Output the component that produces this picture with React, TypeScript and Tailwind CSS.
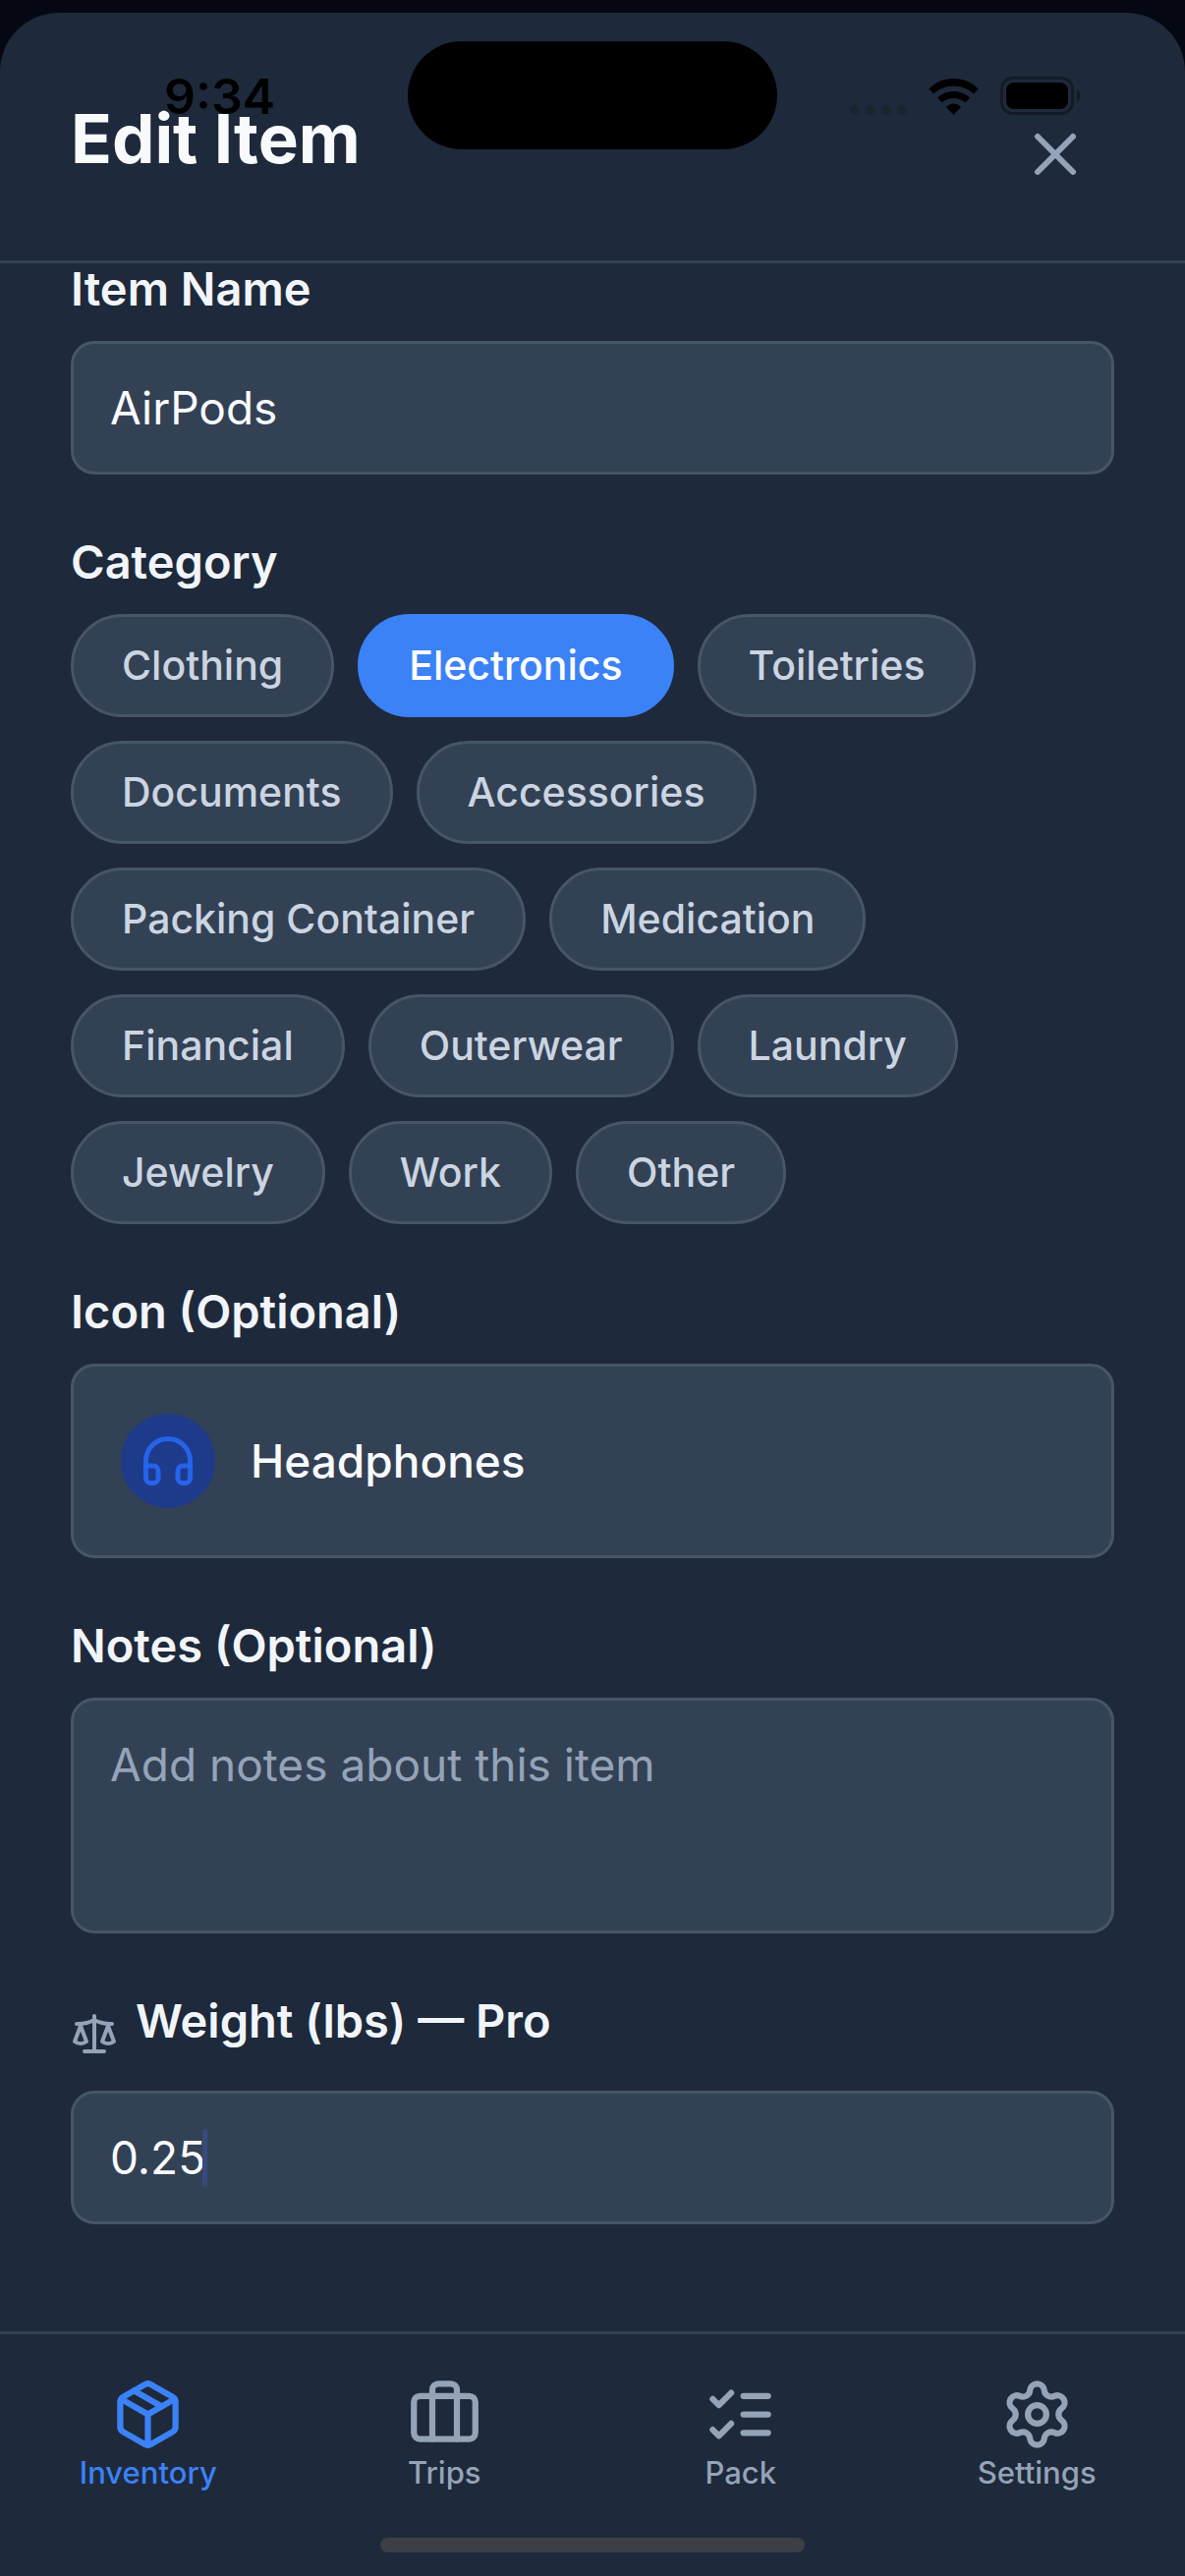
import { useState } from "react";
import { Headphones, Package, Scale, Settings, X } from "lucide-react";
import clsx from "clsx";

const categories = [
  "Clothing",
  "Electronics",
  "Toiletries",
  "Documents",
  "Accessories",
  "Packing Container",
  "Medication",
  "Financial",
  "Outerwear",
  "Laundry",
  "Jewelry",
  "Work",
  "Other",
];

const fieldClass =
  "w-full rounded-3xl border-[3px] border-[#475569] bg-[#334155] px-[37px] text-[46px] leading-[58px] text-[#f8fafc] outline-none placeholder:text-[#94a3b8]";
const labelClass = "block text-[47px] leading-[50px] font-semibold text-[#f1f5f9]";

function SuitcaseIcon() {
  return (
    <svg
      className="size-[75px]"
      viewBox="0 0 24 24"
      fill="none"
      stroke="currentColor"
      strokeWidth="2"
      strokeLinecap="round"
      strokeLinejoin="round"
    >
      <path d="M16 20V4a2 2 0 0 0-2-2h-4a2 2 0 0 0-2 2v16" />
      <rect x="2" y="6" width="20" height="14" rx="2" />
    </svg>
  );
}

function ChecksIcon() {
  return (
    <svg
      className="size-[75px]"
      viewBox="0 0 24 24"
      fill="none"
      stroke="currentColor"
      strokeWidth="2"
      strokeLinecap="round"
      strokeLinejoin="round"
    >
      <path d="m3 7 2 2 4-4" />
      <path d="m3 17 2 2 4-4" />
      <path d="M13 6h8" />
      <path d="M13 12h8" />
      <path d="M13 18h8" />
    </svg>
  );
}

const tabs = [
  { name: "Inventory", icon: <Package className="size-[75px]" /> },
  { name: "Trips", icon: <SuitcaseIcon /> },
  { name: "Pack", icon: <ChecksIcon /> },
  { name: "Settings", icon: <Settings className="size-[75px]" /> },
];

function StatusBar() {
  return (
    <div className="absolute inset-x-0 top-0 grid grid-cols-[1fr_auto_1fr] items-start text-black">
      <span className="pt-[66px] pl-8 text-center text-[50px] leading-[64px] font-semibold">9:34</span>
      <div className="mt-[42px] h-[110px] w-[376px] rounded-full bg-black" />
      <div className="flex items-center justify-end gap-[22px] pt-[78px] pr-[106px]">
        <svg className="h-[38px] w-[58px] fill-[#19242f]" viewBox="0 0 58 38">
          <circle cx="5" cy="33" r="5" />
          <circle cx="21" cy="33" r="5" />
          <circle cx="37" cy="33" r="5" />
          <circle cx="53" cy="33" r="5" />
        </svg>
        <svg className="h-[38px] w-[51px]" viewBox="0 0 51 38">
          <path d="M25.500 1C35.500 1 44.500 5 50.500 11.500L46 16.500C40.500 11.500 33.500 8.500 25.500 8.500S10.500 11.500 5 16.500L.5 11.500C6.500 5 15.500 1 25.500 1Z" />
          <path d="M25.500 14C32 14 37.500 16.500 42 20.500L37.500 25.500C34 22.500 30 21 25.500 21S17 22.500 13.500 25.500L9 20.500C13.500 16.500 19 14 25.500 14Z" />
          <path d="M25.500 26.500C28.500 26.500 31 27.800 33 30L25.500 38L18 30C20 27.800 22.500 26.500 25.500 26.500Z" />
        </svg>
        <svg className="h-[39px] w-[82px]" viewBox="0 0 82 39">
          <rect x="1.500" y="1.500" width="72" height="36" rx="11" fill="none" stroke="#131b27" strokeWidth="3" />
          <rect x="6" y="6" width="63" height="27" rx="8" />
          <path d="M78 13.500a7 7 0 0 1 0 12Z" fill="#131b27" />
        </svg>
      </div>
    </div>
  );
}

export default function App() {
  const [name, setName] = useState("AirPods");
  const [category, setCategory] = useState("Electronics");
  const [notes, setNotes] = useState("");
  const [weight, setWeight] = useState("0.25");
  const [tab, setTab] = useState("Inventory");

  return (
    <div className="relative flex min-h-screen flex-col bg-[#050812] pt-[13px] font-['Inter','Liberation_Sans',sans-serif]">
      <div className="flex flex-1 flex-col rounded-t-[60px] bg-[#1e293b]">
        <StatusBar />

        <header className="relative flex items-start justify-between border-b-[3px] border-[#334155] px-[72px] pt-[84px] pb-12">
          <h1 className="text-[69px] leading-[88px] font-bold text-[#f8fafc]">Edit Item</h1>
          <button aria-label="Close" className="p-6 text-[#94a3b8]">
            <X className="size-[72px]" />
          </button>
        </header>

        <form className="flex flex-1 flex-col gap-16 px-[72px] pt-px" onSubmit={(e) => e.preventDefault()}>
          <div>
            <label htmlFor="name" className={clsx(labelClass, "mb-7")}>
              Item Name
            </label>
            <input
              id="name"
              className={clsx(fieldClass, "block h-[136px]")}
              value={name}
              onChange={(e) => setName(e.target.value)}
            />
          </div>

          <div role="group" aria-labelledby="category">
            <span id="category" className={clsx(labelClass, "mb-7")}>
              Category
            </span>
            <div className="flex flex-wrap gap-6">
              {categories.map((c) => (
                <button
                  key={c}
                  type="button"
                  aria-pressed={c === category}
                  onClick={() => setCategory(c)}
                  className={clsx(
                    "h-[105px] rounded-full border-[3px] px-[49px] text-[41px] font-medium",
                    c === category
                      ? "border-[#3b82f6] bg-[#3b82f6] text-white"
                      : "border-[#475569] bg-[#334155] text-[#cbd5e1]"
                  )}
                >
                  {c}
                </button>
              ))}
            </div>
          </div>

          <div>
            <span id="icon" className={clsx(labelClass, "mb-7")}>
              Icon (Optional)
            </span>
            <button
              type="button"
              aria-describedby="icon"
              className="flex w-full items-center gap-9 rounded-3xl border-[3px] border-[#475569] bg-[#334155] p-12 text-[46px] font-medium text-[#f8fafc]"
            >
              <span className="flex size-24 items-center justify-center rounded-full bg-[#1e3a8a] text-[#2563eb]">
                <Headphones className="size-[60px]" />
              </span>
              Headphones
            </button>
          </div>

          <div>
            <label htmlFor="notes" className={clsx(labelClass, "mb-7")}>
              Notes (Optional)
            </label>
            <textarea
              id="notes"
              placeholder="Add notes about this item"
              className={clsx(fieldClass, "block h-60 resize-none py-[36px]")}
              value={notes}
              onChange={(e) => setNotes(e.target.value)}
            />
          </div>

          <div>
            <div className="mb-[34px] flex items-start gap-[18px]">
              <Scale className="mt-[14px] size-12 text-[#94a3b8]" />
              <label htmlFor="weight" className={labelClass}>
                Weight (lbs) — Pro
              </label>
            </div>
            <div className="relative">
              <input
                id="weight"
                inputMode="decimal"
                className={clsx(fieldClass, "block h-[136px]")}
                value={weight}
                onChange={(e) => setWeight(e.target.value)}
              />
              {/* Caret */}
              <span className="absolute top-[39px] left-[134px] h-[59px] w-[5px] rounded-full bg-[#364a80]" />
            </div>
          </div>
        </form>

        <nav className="flex border-t-[3px] border-[#334155] pt-11 pb-12">
          {tabs.map((t) => (
            <button
              key={t.name}
              onClick={() => setTab(t.name)}
              className={clsx(
                "flex flex-1 flex-col items-center gap-1 text-[31px] leading-[36px] font-medium",
                t.name === tab ? "text-[#3b82f6]" : "text-[#94a3b8]"
              )}
            >
              {t.icon}
              {t.name}
            </button>
          ))}
        </nav>
        <div className="mx-auto mb-6 h-[15px] w-[432px] rounded-full bg-[#3c3f46]" />
      </div>
    </div>
  );
}
